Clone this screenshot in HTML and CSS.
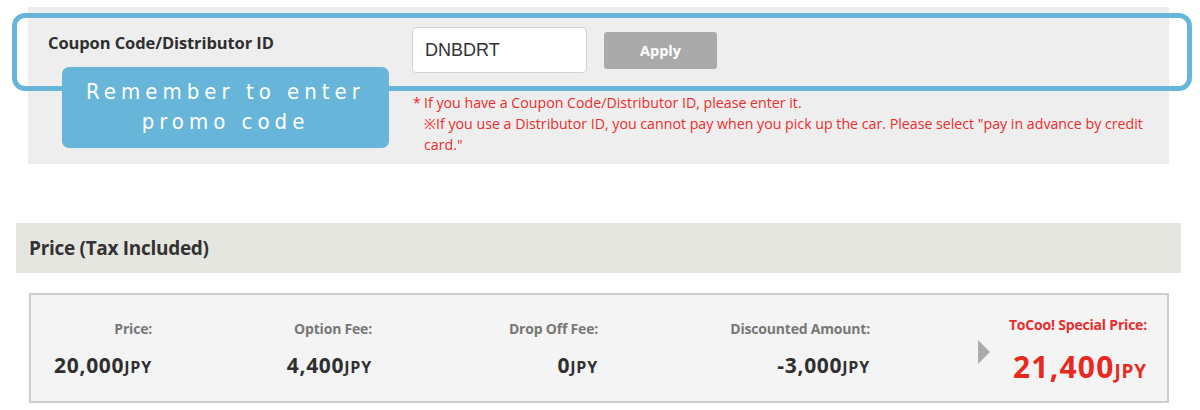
FILE: index.html
```html
<!DOCTYPE html>
<html lang="en">
<head>
<meta charset="utf-8">
<title>Coupon and Price</title>
<link rel="stylesheet" href="styles.css">
</head>
<body>
<div class="page">
  <section class="coupon-panel">
    <div class="coupon-label">Coupon Code/Distributor ID</div>
    <div class="coupon-side">
      <div class="coupon-controls">
        <div class="coupon-input">DNBDRT</div>
        <button class="apply-btn" type="button">Apply</button>
      </div>
      <div class="coupon-note">
        <span class="note-mark">*</span>
        <p>If you have a Coupon Code/Distributor ID, please enter it.<br>※If you use a Distributor ID, you cannot pay when you pick up the car. Please select "pay in advance by credit card."</p>
      </div>
    </div>
    <div class="highlight-ring"></div>
    <div class="callout">Remember to enter<br>promo code</div>
  </section>

  <h2 class="price-header">Price (Tax Included)</h2>

  <section class="price-box">
    <div class="price-col">
      <div class="price-label">Price:</div>
      <div class="price-value">20,000<span class="cur">JPY</span></div>
    </div>
    <div class="price-col">
      <div class="price-label">Option Fee:</div>
      <div class="price-value">4,400<span class="cur">JPY</span></div>
    </div>
    <div class="price-col">
      <div class="price-label">Drop Off Fee:</div>
      <div class="price-value">0<span class="cur">JPY</span></div>
    </div>
    <div class="price-col">
      <div class="price-label">Discounted Amount:</div>
      <div class="price-value">-3,000<span class="cur">JPY</span></div>
    </div>
    <div class="arrow-col"><span class="arrow"></span></div>
    <div class="price-col special">
      <div class="price-label">ToCoo! Special Price:</div>
      <div class="price-value">21,400<span class="cur">JPY</span></div>
    </div>
  </section>
</div>
</body>
</html>
```

FILE: styles.css
```css
* { box-sizing: border-box; }

body {
  margin: 0;
  background: #ffffff;
  font-family: "Open Sans", Lato, "Liberation Sans", sans-serif;
  color: #333333;
}

.page {
  padding-top: 7px;
}

/* ---------- coupon panel ---------- */
.coupon-panel {
  position: relative;
  margin-left: 28px;
  width: 1141px;
  height: 157px;
  background: #eeeeee;
  display: grid;
  grid-template-columns: 384px 1fr;
  padding-top: 20px;
}

.coupon-label {
  padding-left: 20px;
  padding-top: 5px;
  font-size: 16.5px;
  font-weight: 700;
  color: #2f2f2f;
  line-height: 22px;
  letter-spacing: -0.1px;
}

.coupon-controls {
  display: flex;
  align-items: flex-start;
  gap: 17px;
}

.coupon-input {
  width: 175px;
  height: 46px;
  background: #ffffff;
  border: 1px solid #d2d2d2;
  border-radius: 4px;
  padding-left: 12px;
  font-family: "Liberation Sans", Arial, sans-serif;
  font-size: 18px;
  line-height: 44px;
  color: #333333;
}

.apply-btn {
  margin-top: 5px;
  width: 113px;
  height: 37px;
  border: 0;
  border-radius: 3px;
  background: #aaaaaa;
  color: #ffffff;
  font-family: "Open Sans", sans-serif;
  font-size: 14.5px;
  font-weight: 700;
  padding: 0;
}

.coupon-note {
  margin-top: 19px;
  display: flex;
  color: #ee2b2b;
  font-size: 14.2px;
  line-height: 21px;
}

.note-mark {
  width: 12px;
  flex: none;
  padding-left: 1px;
}

.coupon-note p {
  margin: 0;
  width: 728px;
}

.highlight-ring {
  position: absolute;
  left: -16px;
  top: 6px;
  width: 1180px;
  height: 78px;
  border: 5px solid #68b5da;
  border-radius: 13px;
}

.callout {
  position: absolute;
  left: 34px;
  top: 60px;
  width: 327px;
  height: 81px;
  background: #68b5da;
  border-radius: 7px;
  color: #ffffff;
  text-align: center;
  font-family: "DejaVu Sans Condensed", "DejaVu Sans", sans-serif;
  font-size: 22px;
  letter-spacing: 5px;
  line-height: 30px;
  padding-top: 10px;
}

/* ---------- price header ---------- */
.price-header {
  margin: 59px 0 0 16px;
  width: 1165px;
  height: 50px;
  background: #e6e6e0;
  font-size: 19px;
  font-weight: 700;
  color: #333333;
  line-height: 50px;
  padding-left: 13px;
  letter-spacing: -0.3px;
}

/* ---------- price box ---------- */
.price-box {
  margin: 20px 0 0 29px;
  width: 1140px;
  height: 110px;
  background: #f4f4f4;
  border: 2px solid #cccccc;
  display: grid;
  grid-template-columns: 121px 220px 226px 272px 120px 157px;
  padding-top: 24px;
}

.price-col {
  text-align: right;
}

.price-label {
  font-size: 14px;
  font-weight: 700;
  color: #777777;
  line-height: 20px;
  letter-spacing: -0.2px;
}

.price-value {
  margin-top: 13px;
  font-size: 21px;
  font-weight: 700;
  color: #2f2f2f;
  line-height: 26px;
  letter-spacing: 0.7px;
}

.price-value .cur {
  font-size: 16px;
  letter-spacing: 0.8px;
}

.special .price-label {
  color: #ee2b2b;
  margin-top: -4px;
}

.special .price-value {
  color: #e8291f;
  font-size: 30px;
  line-height: 34px;
  margin-top: 15px;
  letter-spacing: 1.2px;
}

.special .price-value .cur {
  font-size: 19px;
}

.arrow-col {
  display: flex;
  justify-content: flex-end;
  padding-top: 21px;
}

.arrow {
  width: 0;
  height: 0;
  border-top: 12px solid transparent;
  border-bottom: 12px solid transparent;
  border-left: 12px solid #aaaaaa;
}
```
